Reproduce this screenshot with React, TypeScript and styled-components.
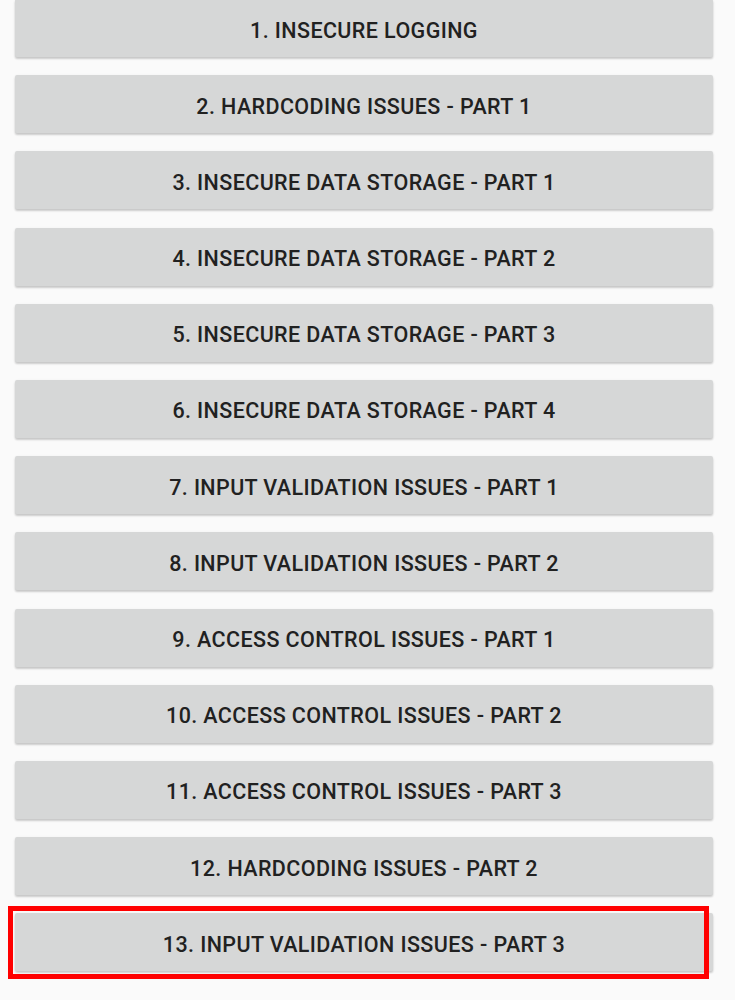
import { createGlobalStyle } from 'styled-components';
import styled from 'styled-components';

const GlobalStyle = createGlobalStyle`
  html, body {
    margin: 0;
    padding: 0;
    background: #fafafa;
    font-family: Roboto, 'Liberation Sans', sans-serif;
  }
`;

const challenges = [
  '1. Insecure Logging',
  '2. Hardcoding Issues - Part 1',
  '3. Insecure Data Storage - Part 1',
  '4. Insecure Data Storage - Part 2',
  '5. Insecure Data Storage - Part 3',
  '6. Insecure Data Storage - Part 4',
  '7. Input Validation Issues - Part 1',
  '8. Input Validation Issues - Part 2',
  '9. Access Control Issues - Part 1',
  '10. Access Control Issues - Part 2',
  '11. Access Control Issues - Part 3',
  '12. Hardcoding Issues - Part 2',
  '13. Input Validation Issues - Part 3',
];

export default function App() {
  return (
    <>
      <GlobalStyle />
      <S.Screen>
        <S.List>
          {challenges.map((label, i) => (
            <S.Item key={label}>
              <S.Button type='button'>{label}</S.Button>
              {i === challenges.length - 1 && <S.Highlight />}
            </S.Item>
          ))}
        </S.List>
      </S.Screen>
    </>
  );
}

const S = {
  Screen: styled.div`
    width: 735px;
    height: 1000px;
    overflow: hidden;
    background: #fafafa;
  `,

  List: styled.div`
    display: flex;
    flex-direction: column;
    gap: 18.2px;
    margin-top: -1px;
    padding-left: 15px;
    width: 698px;
  `,

  Item: styled.div`
    position: relative;
  `,

  Button: styled.button`
    display: flex;
    align-items: center;
    justify-content: center;
    width: 100%;
    height: 58px;
    border: none;
    border-radius: 2px;
    background: #d6d7d7;
    box-shadow: 0 2px 2px rgba(0, 0, 0, 0.14), 0 1px 3px rgba(0, 0, 0, 0.1);
    color: #212121;
    font-family: Roboto, 'Liberation Sans', sans-serif;
    font-size: 21.5px;
    font-weight: 500;
    letter-spacing: 0.4px;
    text-transform: uppercase;
    padding: 4px 0 0;
  `,

  Highlight: styled.div`
    position: absolute;
    left: -7px;
    top: -7px;
    width: 701px;
    height: 73px;
    box-sizing: border-box;
    border: 5.5px solid #ff0000;
    pointer-events: none;
  `,
};
